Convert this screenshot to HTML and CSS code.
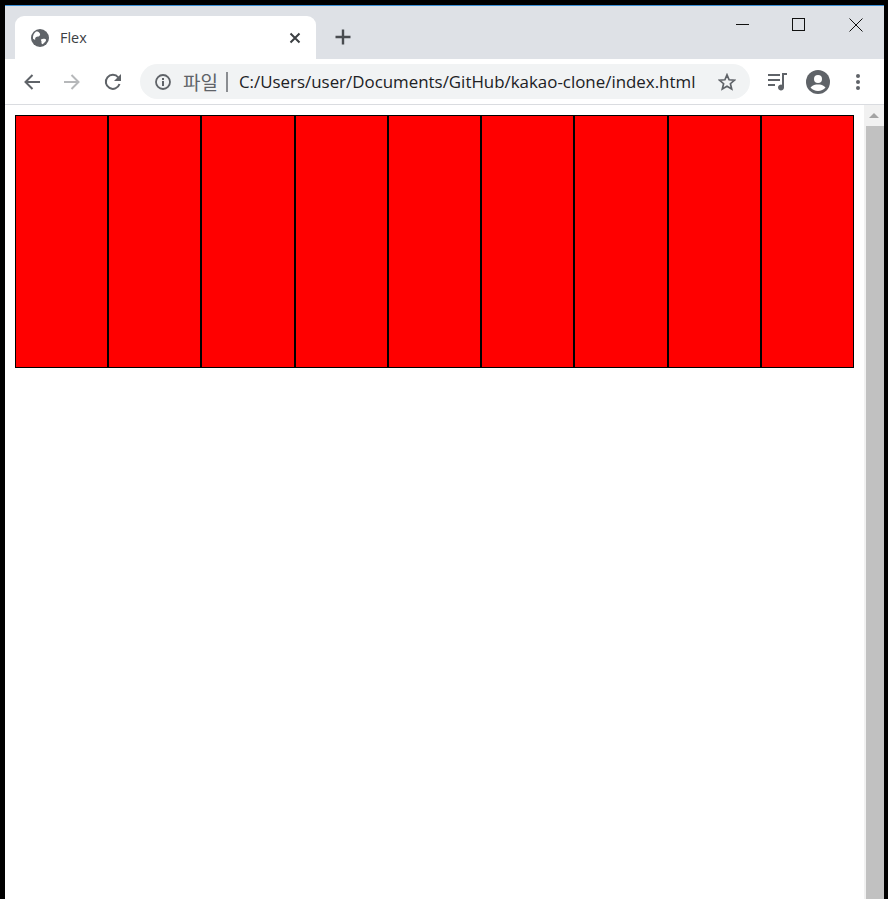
FILE: index.html
```html
<!DOCTYPE html>
<html lang="ko">
<head>
  <meta charset="UTF-8" />
  <title>Flex</title>
  <link rel="stylesheet" href="styles.css">
</head>
<body>
  <div class="window">
    <div class="tabstrip">
      <div class="tab">
        <svg class="tab-icon" width="18" height="18" viewBox="0 0 18 18"><circle cx="9" cy="9" r="9" fill="#5f6368"/><path d="M5 2.600c1.500-.1 2.700.4 3.500 1.300.9 1 .8 2.200-.1 3-1 .8-2.200.4-3.200 1.100-.9.700-1.300 1.700-1 2.900L2 9.800c-.3-2.900.8-5.600 3-7.200z M10 10.400c1.400-.7 2.800-.8 4.200-.4.900.3 1.100 1 .6 1.900-.9 1.300-2.200 2.500-3.600 3.300-.7-.6-.9-1.700-.7-2.700.1-.9-1-1.300-.5-2.100z" fill="#fff"/></svg>
        <span class="tab-title">Flex</span>
        <svg class="tab-close" width="12" height="12" viewBox="0 0 12 12"><path d="M1.500 1.500l9 9m0-9l-9 9" stroke="#3c4043" stroke-width="2" fill="none"/></svg>
      </div>
      <svg class="new-tab" width="16" height="16" viewBox="0 0 16 16"><path d="M8 .5v15M.5 8h15" stroke="#494c50" stroke-width="2.400" fill="none"/></svg>
      <div class="win-controls">
        <svg class="win-min" width="14" height="14" viewBox="0 0 14 14"><path d="M0 6.500h13" stroke="#111" fill="none"/></svg>
        <svg class="win-max" width="14" height="14" viewBox="0 0 14 14"><rect x=".5" y=".5" width="12" height="12" stroke="#111" fill="none"/></svg>
        <svg class="win-close" width="14" height="14" viewBox="0 0 14 14"><path d="M.5.5l13 13m0-13l-13 13" stroke="#111" fill="none"/></svg>
      </div>
    </div>
    <div class="toolbar">
      <svg class="nav-btn" width="18" height="18" viewBox="0 0 18 18"><path d="M17 9H2.500M9.500 2l-7 7 7 7" stroke="#5f6368" stroke-width="2" fill="none"/></svg>
      <svg class="nav-btn" width="18" height="18" viewBox="0 0 18 18"><path d="M1 9h14.500M8.500 2l7 7-7 7" stroke="#b6b8ba" stroke-width="2" fill="none"/></svg>
      <svg class="nav-btn reload" width="18" height="18" viewBox="0 0 18 18"><path d="M15.500 11a7 7 0 1 1-1.200-6.500" stroke="#5f6368" stroke-width="2" fill="none"/><path d="M17 1v7h-7z" fill="#5f6368"/></svg>
      <div class="omnibox">
        <svg class="info-icon" width="16" height="16" viewBox="0 0 16 16"><circle cx="8" cy="8" r="7" stroke="#5f6368" stroke-width="1.800" fill="none"/><path d="M7 7h2v5H7zM7 4h2v2H7z" fill="#5f6368"/></svg>
        <span class="scheme">파일</span>
        <span class="divider"></span>
        <span class="url">C:/Users/user/Documents/GitHub/kakao-clone/index.html</span>
        <svg class="star" width="18" height="18" viewBox="0 0 18 18"><path d="M9 1.800l2.100 5 5.400.4-4.100 3.500 1.300 5.300L9 13.200 4.300 16l1.300-5.300L1.500 7.200l5.400-.4z" stroke="#5f6368" stroke-width="1.700" fill="none"/></svg>
      </div>
      <svg class="media-btn" width="20" height="20" viewBox="0 0 20 20"><path d="M0 3h12M0 8h12M0 13h7" stroke="#5f6368" stroke-width="2" fill="none"/><path d="M14 1h5v2h-3v12.500a3 3 0 1 1-2-2.800z" fill="#5f6368"/></svg>
      <svg class="avatar" width="24" height="24" viewBox="0 0 24 24"><circle cx="12" cy="12" r="12" fill="#5f6368"/><circle cx="12" cy="9" r="4" fill="#fff"/><path d="M4.500 17.500c2-2.500 5-3 7.500-3s5.500.5 7.500 3c-1.800 2.200-4.500 3.500-7.500 3.500s-5.700-1.300-7.500-3.500z" fill="#fff"/></svg>
      <svg class="menu-btn" width="4" height="18" viewBox="0 0 4 18"><circle cx="2" cy="3" r="2" fill="#5f6368"/><circle cx="2" cy="9" r="2" fill="#5f6368"/><circle cx="2" cy="15" r="2" fill="#5f6368"/></svg>
    </div>
    <div class="viewport">
      <div class="content">
        <div class="boxes">
          <div class="box"></div>
          <div class="box"></div>
          <div class="box"></div>
          <div class="box"></div>
          <div class="box"></div>
          <div class="box"></div>
          <div class="box"></div>
          <div class="box"></div>
          <div class="box"></div>
        </div>
      </div>
      <div class="scrollbar">
        <div class="scroll-up"></div>
        <div class="scroll-thumb"></div>
      </div>
    </div>
  </div>
</body>
</html>
```

FILE: styles.css
```css
html, body {
  margin: 0;
  height: 100%;
  overflow: hidden;
  background: #000;
}

.window {
  box-sizing: border-box;
  height: 899px;
  margin: 5px 4px 0 5px;
  border-top: 1px solid #3b8fd6;
  display: flex;
  flex-direction: column;
  font-family: "Open Sans", "Noto Sans CJK KR", sans-serif;
}

.tabstrip {
  height: 53px;
  flex: none;
  background: #dee1e6;
  display: flex;
  align-items: flex-end;
  padding-left: 10px;
}

.tab {
  width: 301px;
  height: 43px;
  box-sizing: border-box;
  background: #fff;
  border-radius: 9px 9px 0 0;
  display: flex;
  align-items: center;
  padding: 0 15px 0 16px;
}

.tab-title {
  margin-left: 11px;
  font-size: 14.400px;
  color: #3c4043;
  flex: 1;
}

.new-tab {
  margin: 0 0 14px 19px;
}

.win-controls {
  margin-left: auto;
  align-self: flex-start;
  display: flex;
  padding: 12px 21px 0 0;
}

.win-max {
  margin-left: 42px;
}

.win-close {
  margin-left: 43px;
}

.toolbar {
  height: 46px;
  flex: none;
  box-sizing: border-box;
  background: #fff;
  border-bottom: 1px solid #dadce0;
  display: flex;
  align-items: center;
  padding: 0 0 0 18px;
}

.nav-btn {
  margin-right: 22px;
}

.reload {
  margin-left: 1px;
  margin-right: 20px;
}

.omnibox {
  width: 610px;
  height: 35px;
  box-sizing: border-box;
  margin-left: -2px;
  background: #f1f3f4;
  border-radius: 18px;
  display: flex;
  align-items: center;
  padding: 0 14px 0 15px;
}

.scheme {
  margin-left: 12px;
  font-size: 19px;
  color: #5f6368;
}

.divider {
  width: 2px;
  height: 20px;
  margin: 0 11px 0 8px;
  background: #8a8d91;
}

.url {
  flex: 1;
  font-size: 16.900px;
  color: #202124;
  white-space: nowrap;
}

.media-btn {
  margin-left: 18px;
}

.avatar {
  margin-left: 18px;
}

.menu-btn {
  margin-left: 26px;
}

.viewport {
  flex: 1;
  display: flex;
  background: #fff;
  min-height: 0;
}

.content {
  flex: 1;
  padding: 10px;
}

.boxes {
  display: flex;
  width: 839px;
  height: 253px;
}

.box {
  flex: 1;
  box-sizing: border-box;
  background: #f00;
  border: 1px solid #000;
}

.scrollbar {
  width: 20px;
  flex: none;
  background: #f1f1f1;
}

.scroll-up {
  height: 21px;
  position: relative;
}

.scroll-up::before {
  content: "";
  display: block;
  width: 0;
  margin: 0 auto;
  position: relative;
  top: 8px;
  border: 5px solid transparent;
  border-top: 0;
  border-bottom-color: #a3a3a3;
}

.scroll-thumb {
  height: 100%;
  margin-left: 2px;
  background: #c1c1c1;
}
```
